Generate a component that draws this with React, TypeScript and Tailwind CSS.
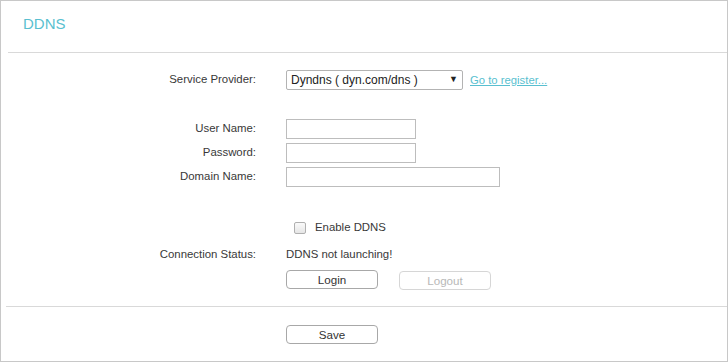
const labelCls = 'w-[255px] shrink-0 text-right text-[11.4px] text-[#383838]'

const Row = ({ label, children, className = '' }: { label?: string; children?: React.ReactNode; className?: string }) => (
  <div className={`flex items-center ${className}`}>
    <div className={labelCls}>{label}</div>
    <div className="ml-[30px] flex items-center">{children}</div>
  </div>
)

const TextBox = ({ w }: { w: string }) => (
  <input type="text" className={`${w} h-[20px] border border-[#bdbdbd] bg-white px-1 text-[12px] outline-none`} />
)

const Btn = ({ text, disabled }: { text: string; disabled?: boolean }) => (
  <button
    type="button"
    disabled={disabled}
    className={`w-[92px] h-[19px] rounded-[4px] border bg-white text-[11.6px] leading-none ${
      disabled ? 'border-[#d6d6d6] text-[#b8b8b8]' : 'border-[#a8a8a8] text-[#333]'
    }`}
  >
    {text}
  </button>
)

export default function App() {
  return (
    <div className="w-[728px] h-[362px] bg-white" style={{ fontFamily: '"Liberation Sans", Arial, sans-serif' }}>
      <div className="w-full h-full border border-[#c8c8c8] flex flex-col">
        {/* header */}
        <div className="h-[51px] pl-[22px] flex items-center">
          <h1 className="text-[15px] text-[#59bfd0] mt-[-4px]">DDNS</h1>
        </div>
        <div className="ml-[7px] h-px bg-[#d9d9d9]" />

        {/* form */}
        <Row label="Service Provider:" className="mt-[17px] h-[20px]">
          <div className="w-[177px] h-[20px] border border-[#b3b3b3] rounded-[2px] flex items-center justify-between pl-[4px] pr-[4px]">
            <span className="text-[12px] text-[#222]">Dyndns ( dyn.com/dns )</span>
            <span className="text-[9px] text-[#222]">▼</span>
          </div>
          <a href="#" className="ml-[7px] text-[11.3px] text-[#59bfd0] underline">Go to register...</a>
        </Row>

        <Row label="User Name:" className="mt-[29px] h-[20px]">
          <TextBox w="w-[130px]" />
        </Row>
        <Row label="Password:" className="mt-[4px] h-[20px]">
          <TextBox w="w-[130px]" />
        </Row>
        <Row label="Domain Name:" className="mt-[4px] h-[20px]">
          <TextBox w="w-[214px]" />
        </Row>

        <Row className="mt-[31px] h-[20px]">
          <span className="ml-[8px] w-[12px] h-[12px] rounded-[2px] border border-[#b0b0b0] bg-gradient-to-b from-[#fafafa] to-[#e6e6e6]" />
          <span className="ml-[9px] text-[11.4px] text-[#383838]">Enable DDNS</span>
        </Row>

        <Row label="Connection Status:" className="mt-[7px] h-[20px]">
          <span className="text-[11.4px] text-[#383838]">DDNS not launching!</span>
        </Row>

        <Row className="mt-[5px] h-[19px]">
          <Btn text="Login" />
          <div className="ml-[21px]">
            <Btn text="Logout" disabled />
          </div>
        </Row>

        <div className="mt-[17px] ml-[5px] h-px bg-[#d9d9d9]" />

        <Row className="mt-[18px] h-[19px]">
          <Btn text="Save" />
        </Row>
      </div>
    </div>
  )
}
